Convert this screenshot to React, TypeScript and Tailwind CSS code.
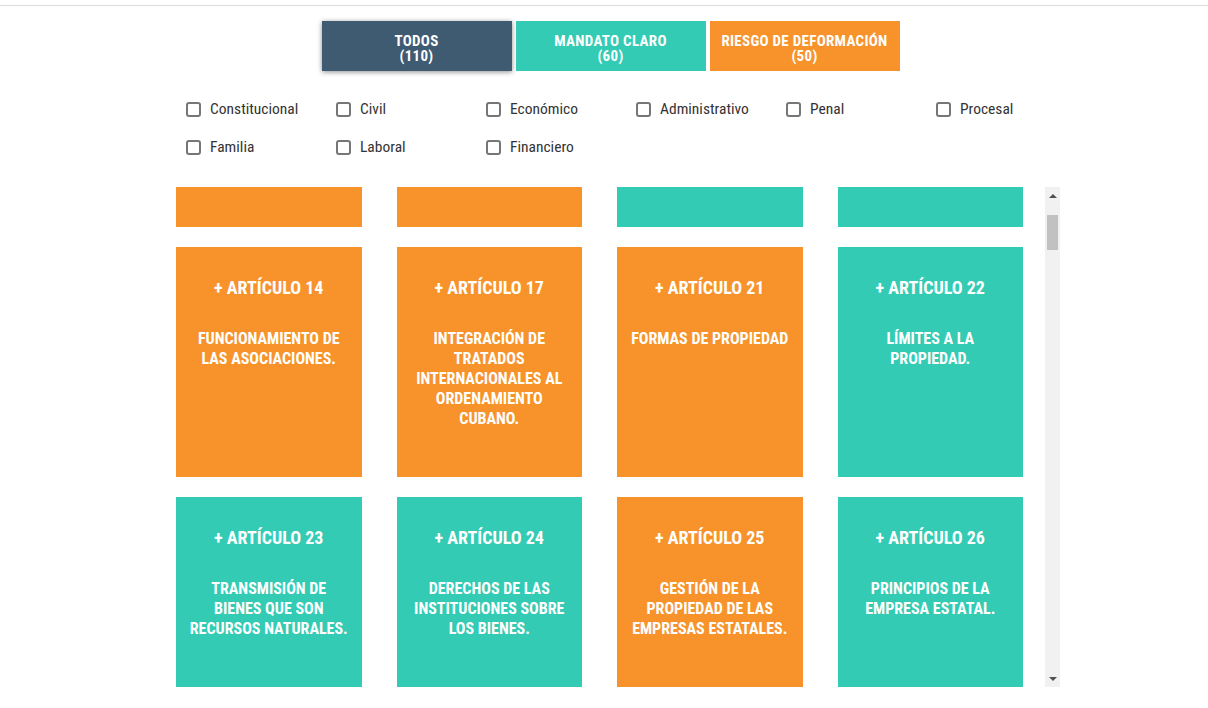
import React from "react";

type Kind = "claro" | "riesgo";

interface Article {
  num: number;
  title: string;
  kind: Kind;
}

const narrow = "font-['Liberation_Sans_Narrow','Roboto_Condensed','Liberation_Sans',sans-serif]";

const filters = [
  "Constitucional",
  "Civil",
  "Económico",
  "Administrativo",
  "Penal",
  "Procesal",
  "Familia",
  "Laboral",
  "Financiero",
];

// first row is scrolled mostly out of view
const articles: Article[] = [
  { num: 10, title: "Relaciones internacionales.", kind: "riesgo" },
  { num: 12, title: "Principios de política exterior.", kind: "riesgo" },
  { num: 13, title: "Fines del Estado.", kind: "claro" },
  { num: 13, title: "Derechos y deberes.", kind: "claro" },
  { num: 14, title: "Funcionamiento de las asociaciones.", kind: "riesgo" },
  { num: 17, title: "Integración de tratados internacionales al ordenamiento cubano.", kind: "riesgo" },
  { num: 21, title: "Formas de propiedad", kind: "riesgo" },
  { num: 22, title: "Límites a la propiedad.", kind: "claro" },
  { num: 23, title: "Transmisión de bienes que son recursos naturales.", kind: "claro" },
  { num: 24, title: "Derechos de las instituciones sobre los bienes.", kind: "claro" },
  { num: 25, title: "Gestión de la propiedad de las empresas estatales.", kind: "riesgo" },
  { num: 26, title: "Principios de la empresa estatal.", kind: "claro" },
];

function Tab({ label, count, className }: { label: string; count: number; className: string }) {
  return (
    <button
      className={`w-[190px] h-[50px] pt-[5px] flex flex-col items-center justify-center text-white font-bold text-[15px] leading-[15px] tracking-[0.3px] ${narrow} ${className}`}
    >
      <span>{label}</span>
      <span>({count})</span>
    </button>
  );
}

function Filter({ label }: { label: string }) {
  return (
    <label className={`flex items-center gap-[9px] h-[38px] text-[15.5px] leading-[20px] text-[#333] ${narrow}`}>
      <span className="w-[15px] h-[15px] border-2 border-[#767676] rounded-[3px] bg-white" />
      <span>{label}</span>
    </label>
  );
}

function ArticleCard({ num, title, kind }: Article) {
  const bg = kind === "claro" ? "bg-[#33cbb3]" : "bg-[#f7932a]";
  return (
    <div className={`h-[230px] ${bg} text-white text-center px-[10px] pt-[29px] ${narrow}`}>
      <div className="text-[18px] leading-[24px] font-bold">+ ARTÍCULO {num}</div>
      <div className="mt-[29px] text-[16px] leading-[20px] font-bold uppercase">{title}</div>
    </div>
  );
}

function Scrollbar() {
  return (
    <div className="w-[15px] h-full bg-[#f1f1f1] flex flex-col items-center">
      <div className="h-[17px] flex items-center justify-center">
        <span className="w-0 h-0 border-x-[4px] border-x-transparent border-b-[4px] border-b-[#505050]" />
      </div>
      <div className="w-[11px] h-[35px] mt-[11px] bg-[#c1c1c1]" />
      <div className="flex-1" />
      <div className="h-[17px] flex items-center justify-center">
        <span className="w-0 h-0 border-x-[4px] border-x-transparent border-t-[4px] border-t-[#505050]" />
      </div>
    </div>
  );
}

export default function App() {
  return (
    <div className="w-[1208px] h-[708px] bg-white overflow-hidden">
      <div className="h-[6px] border-b border-[#dcdcdc]" />
      <div className="pl-[176px] w-[1060px]">
        <div className="w-[869px] flex justify-center gap-[4px] mt-[15px]">
          <Tab label="TODOS" count={110} className="bg-[#3e5b72] shadow-[0_1px_5px_rgba(0,0,0,0.45)]" />
          <Tab label="MANDATO CLARO" count={60} className="bg-[#33cbb3]" />
          <Tab label="RIESGO DE DEFORMACIÓN" count={50} className="bg-[#f7932a]" />
        </div>
        <div className="grid grid-cols-[repeat(6,150px)] pl-[10px] mt-[19px]">
          {filters.map((f) => (
            <Filter key={f} label={f} />
          ))}
        </div>
        <div className="flex mt-[21px] h-[500px]">
          <div className="w-[847px] overflow-hidden">
            <div className="grid grid-cols-4 gap-x-[35px] gap-y-[20px] -mt-[190px]">
              {articles.map((a, i) => (
                <ArticleCard key={i} {...a} />
              ))}
            </div>
          </div>
          <div className="ml-[22px]">
            <Scrollbar />
          </div>
        </div>
      </div>
    </div>
  );
}
